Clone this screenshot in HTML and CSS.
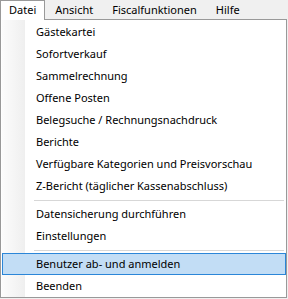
FILE: index.html
```html
<!DOCTYPE html>
<html>
<head>
<meta charset="utf-8">
<title>Datei</title>
<link rel="stylesheet" href="styles.css">
</head>
<body>

<div class="menubar">
  <div class="menubar-item open">Datei</div>
  <div class="menubar-item">Ansicht</div>
  <div class="menubar-item">Fiscalfunktionen</div>
  <div class="menubar-item">Hilfe</div>
</div>

<div class="dropdown">
  <div class="item">Gästekartei</div>
  <div class="item">Sofortverkauf</div>
  <div class="item">Sammelrechnung</div>
  <div class="item">Offene Posten</div>
  <div class="item">Belegsuche / Rechnungsnachdruck</div>
  <div class="item">Berichte</div>
  <div class="item">Verfügbare Kategorien und Preisvorschau</div>
  <div class="item">Z-Bericht (täglicher Kassenabschluss)</div>
  <div class="separator"></div>
  <div class="item">Datensicherung durchführen</div>
  <div class="item">Einstellungen</div>
  <div class="separator"></div>
  <div class="item selected">Benutzer ab- und anmelden</div>
  <div class="item">Beenden</div>
</div>

</body>
</html>
```

FILE: styles.css
```css
html, body {
  height: 100%;
}
body {
  margin: 0;
  background-color: #f0f0f0;
  font-family: "Noto Sans", "Open Sans", sans-serif;
  font-size: 11px;
  color: #000;
  overflow: hidden;
}

.menubar {
  display: flex;
  height: 19px;
  background-color: #f0f0f0;
}
.menubar-item {
  padding: 0 9px 0 10px;
  line-height: 19px;
  white-space: nowrap;
}
.menubar-item.open {
  position: relative;
  z-index: 1;
  height: 20px;
  box-sizing: border-box;
  padding: 0 8px;
  background-color: #fff;
  border: 1px solid #999;
  border-bottom: none;
  line-height: 18px;
}

.dropdown {
  width: 287px;
  box-sizing: border-box;
  padding: 1px 0 0 1px;
  border: 1px solid #999;
  background: linear-gradient(to right, #fcfcfc, #efefef) 1px 0 / 23px 100% no-repeat, #fff;
}

.item {
  height: 22px;
  box-sizing: border-box;
  padding-left: 34px;
  line-height: 21px;
  white-space: nowrap;
}
.item.selected {
  background-color: #c2ddf5;
  border: 1px solid #2b86d8;
  padding-left: 33px;
  line-height: 19px;
}

.separator {
  height: 6px;
  box-sizing: border-box;
  padding: 3px 2px 0 32px;
}
.separator::before {
  content: "";
  display: block;
  height: 1px;
  background-color: #d7d7d7;
}
```
